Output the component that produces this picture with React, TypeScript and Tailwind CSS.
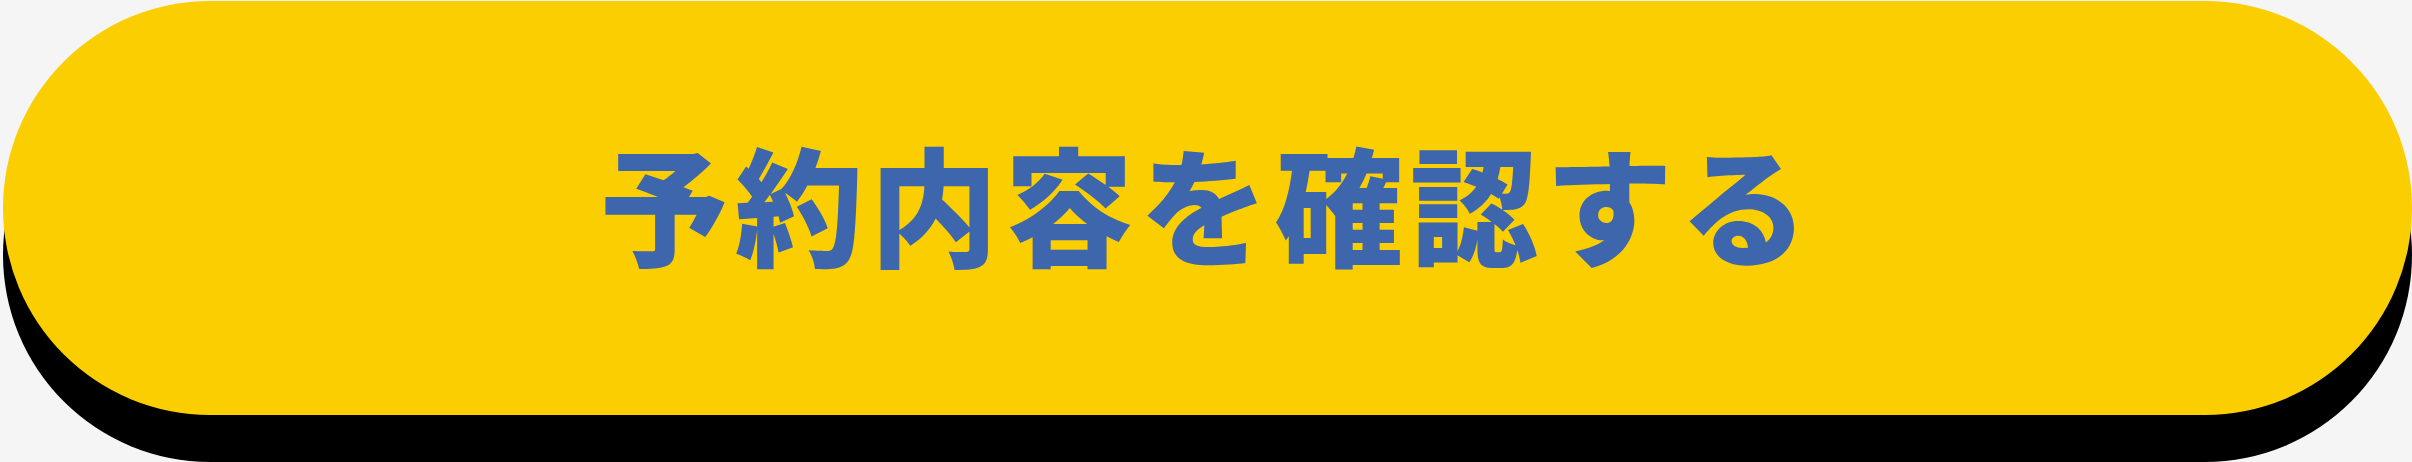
import React from 'react';

const ConfirmButton: React.FC<{ label: string }> = ({ label }) => (
    <button
        type="button"
        className="flex h-[414px] w-[2409px] shrink-0 items-center justify-center rounded-full bg-[#face00] shadow-[0_47px_0_#000]"
    >
        <span className="pb-[12px] font-['Noto_Sans_CJK_JP','Noto_Sans_CJK_SC',sans-serif] text-[128px] font-black leading-none tracking-[7px] text-[#3d66ad]">
            {label}
        </span>
    </button>
);

const App: React.FC = () => {
    return (
        <div className="flex h-[462px] w-full items-start overflow-hidden bg-[#f5f5f5] pl-[3px] pt-px">
            <ConfirmButton label="予約内容を確認する" />
        </div>
    );
};

export default App;
